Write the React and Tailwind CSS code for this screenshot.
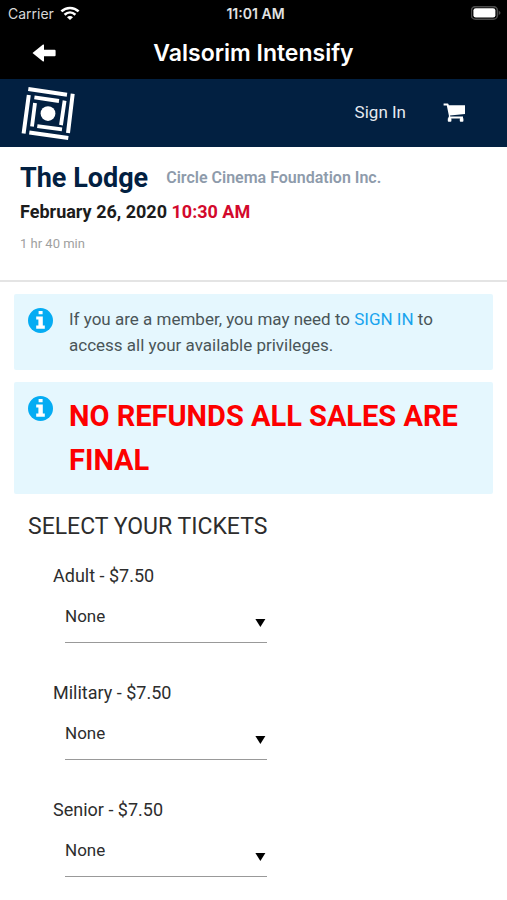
import { useState } from "react";

const tickets = [
  { id: "adult", name: "Adult", price: "$7.50" },
  { id: "military", name: "Military", price: "$7.50" },
  { id: "senior", name: "Senior", price: "$7.50" },
];

function WifiIcon() {
  return (
    <svg className="w-5 h-4" viewBox="0 0 20 16" fill="none" stroke="#fff" strokeWidth="2.6">
      <path d="M1.4 5.4C6.2 0.8 13.8 0.8 18.6 5.4" />
      <path d="M4.6 8.7C7.8 5.8 12.2 5.8 15.4 8.7" />
      <path d="M10 14L7 11.2C8.6 9.6 11.4 9.6 13 11.2Z" fill="#fff" stroke="none" />
    </svg>
  );
}

function BatteryIcon() {
  return (
    <svg className="w-8 h-4" viewBox="0 0 32 16">
      <rect x="0.4" y="0.6" width="26" height="12.6" rx="4" fill="#000" stroke="#4b4b4b" strokeWidth="1.6" />
      <rect x="2.4" y="2.2" width="22" height="9.4" rx="2.4" fill="#fff" />
      <path d="M27.8 4.8C30 5.6 30 8.2 27.8 9Z" fill="#4b4b4b" />
    </svg>
  );
}

function BackIcon() {
  return (
    <svg className="w-6 h-5" viewBox="0 0 24 20" fill="#fff">
      <path d="M0.5 9L11 0.6Q12 0 12 1.2V5.8H22.6Q23.6 5.8 23.6 6.8V11.2Q23.6 12.2 22.6 12.2H12V16.8Q12 18 11 17.4Z" />
    </svg>
  );
}

function Logo() {
  return (
    <svg className="w-14 h-14" viewBox="0 -0.6 56 56" stroke="#fff" strokeWidth="4" fill="none">
      <circle cx="28" cy="28" r="7.4" fill="#fff" stroke="none" />
      <path d="M8.3 3.4L47 9.2M52.7 8.2L48 47.5M48.3 52.4L9.3 46.8M3.6 48L8.8 9.3" />
      <path strokeWidth="3.8" d="M14.4 11.8L39 15.4M44.6 15L41 39.5M42 43.8L17.3 40.6M12 41L15 17.5" />
    </svg>
  );
}

function CartIcon() {
  return (
    <svg className="w-6 h-5" viewBox="0 0 24 20" fill="#fff">
      <path d="M0.6 0.6H4.6Q5.4 0.6 5.6 1.4L5.8 2.2H22V11L7 12.4L7.3 13.6H20V15.4H5.8Q5.1 15.2 5.4 14.3L6 13.2L3.8 2.5H0.6Z" />
      <rect x="4.8" y="15" width="3.6" height="3.8" rx="0.8" />
      <rect x="16.8" y="15" width="3.6" height="3.8" rx="0.8" />
    </svg>
  );
}

function InfoIcon() {
  return (
    <svg className="shrink-0 size-[25px] mt-0.5" viewBox="0 0 25 25">
      <circle cx="12.5" cy="12.5" r="12.5" fill="#05acf3" />
      <path d="M10.6 3H14.6V6.2H10.6ZM8.2 8.6H14.8V17.6H16.8V20.8H8.2V17.6H10.4V11.6H8.2Z" fill="#fff" />
    </svg>
  );
}

function Notice({ children }) {
  return (
    <div className="flex gap-4 px-3.5 py-3 rounded-xs bg-[#e5f7fe]">
      <InfoIcon />
      {children}
    </div>
  );
}

function TicketRow({ ticket }) {
  const [count, setCount] = useState("0");

  return (
    <div className="mb-[38px] pl-[25px]">
      <label htmlFor={ticket.id} className="block text-lg leading-6 text-[#2d2d2d]">
        {ticket.name} - {ticket.price}
      </label>
      <div className="relative ml-3 mt-2 w-[202px]">
        <select id={ticket.id} value={count} onChange={(e) => setCount(e.target.value)}
                className="block w-full h-[47px] pb-1 appearance-none bg-transparent border-b border-[#999] text-[17px] text-[#2d2d2d]">
          <option value="0">None</option>
          <option value="1">1</option>
          <option value="2">2</option>
          <option value="3">3</option>
          <option value="4">4</option>
        </select>
        <svg className="absolute right-0 bottom-4 w-3 h-2 pointer-events-none" viewBox="0 0 12 8">
          <path d="M0.4 0H10.4L5.4 8Z" fill="#000" />
        </svg>
      </div>
    </div>
  );
}

export default function App() {
  return (
    <div className="min-h-screen bg-white font-['Roboto',sans-serif]">
      <div className="bg-black text-white font-['Inter',sans-serif]">
        <div className="grid grid-cols-3 items-center h-7 pl-2 pr-1">
          <div className="flex items-center gap-1.5 text-sm text-[#d8d8d8]">
            Carrier <WifiIcon />
          </div>
          <div className="text-center text-sm font-semibold text-[#e2e2e2]">11:01 AM</div>
          <div className="flex justify-end"><BatteryIcon /></div>
        </div>
        <div className="grid grid-cols-[48px_1fr_48px] items-center h-[51px] px-2">
          <button aria-label="Back" className="flex justify-end"><BackIcon /></button>
          <h1 className="text-center text-[23px] font-semibold">Valsorim Intensify</h1>
        </div>
      </div>

      <nav className="flex items-center justify-between h-17 pl-5 pr-10 bg-[#022041] text-white">
        <a href="#" aria-label="Home"><Logo /></a>
        <div className="flex items-center gap-[37px]">
          <a href="#" className="text-[17px] text-[#e6eaf0]">Sign In</a>
          <button aria-label="Cart"><CartIcon /></button>
        </div>
      </nav>

      <header className="px-5 pt-[13px] pb-6 border-b-2 border-[#e4e4e4]">
        <div className="flex items-center gap-[18px]">
          <h2 className="text-[27px] leading-9 font-bold text-[#022041]">The Lodge</h2>
          <span className="text-base font-semibold text-[#8e9bab]">Circle Cinema Foundation Inc.</span>
        </div>
        <p className="text-lg leading-8 font-bold text-[#1c1c1c]">
          February 26, 2020 <span className="text-[#d3092c]">10:30 AM</span>
        </p>
        <p className="mt-1 text-[13px] leading-6 text-[#a0a0a0]">1 hr 40 min</p>
      </header>

      <main className="px-3.5 pt-3">
        <div className="flex flex-col gap-3">
          <Notice>
            <p className="text-[17px] leading-[26px] text-[#4a5558]">
              If you are a member, you may need to <a href="#" className="text-[#18a4ee]">SIGN IN</a> to
              access all your available privileges.
            </p>
          </Notice>
          <Notice>
            <p className="text-[29px] leading-11 font-bold text-[#fd0000]">NO REFUNDS ALL SALES ARE FINAL</p>
          </Notice>
        </div>

        <section className="px-3.5 pt-[17px]">
          <h3 className="mb-[21px] text-[23px] leading-8 text-[#2d2d2d]">SELECT YOUR TICKETS</h3>
          {tickets.map((ticket) => (
            <TicketRow key={ticket.id} ticket={ticket} />
          ))}
        </section>
      </main>
    </div>
  );
}
